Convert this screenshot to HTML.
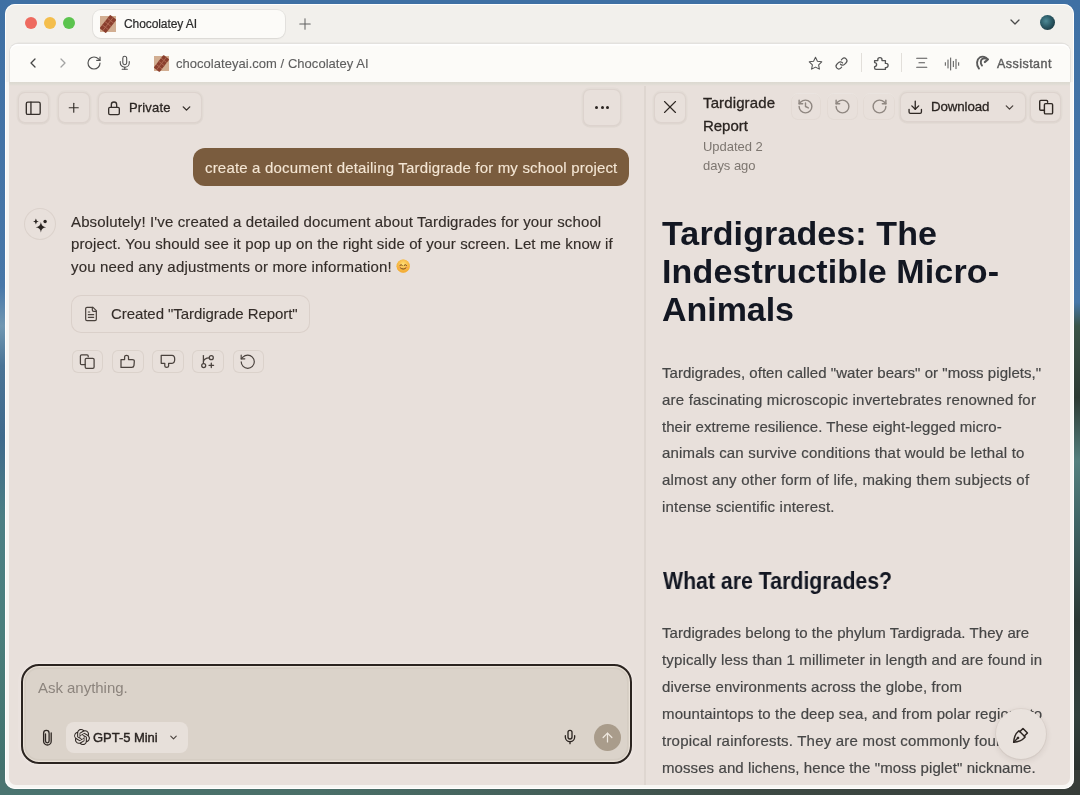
<!DOCTYPE html>
<html><head><meta charset="utf-8">
<style>
*{box-sizing:border-box;margin:0;padding:0}
html,body{width:1080px;height:795px;overflow:hidden}
body{position:relative;font-family:"Liberation Sans",sans-serif;
 background:#3f70a4;}
.abs{position:absolute}
.t{position:absolute;white-space:nowrap;line-height:1;will-change:transform}
svg{position:absolute;overflow:visible}
</style></head>
<body>
<div class="abs" style="left:1050px;top:0px;width:30px;height:795px;background:linear-gradient(180deg,#3f70a4 0%,#4677a9 38%,#3a5548 41%,#2c3a33 50%,#54807e 58%,#3e6464 66%,#2a3834 78%,#30403c 90%,#262a28 100%)"></div>
<div class="abs" style="left:0px;top:0px;width:30px;height:795px;background:linear-gradient(180deg,#3f70a4 0%,#4777a8 36%,#7097b2 41%,#4a7496 46%,#3f6a8c 55%,#4b7f84 65%,#4a7f7c 80%,#3f6f6a 100%)"></div>
<div class="abs" style="left:0px;top:770px;width:1080px;height:25px;background:linear-gradient(90deg,#4a7470 0%,#4a6f68 30%,#44605a 50%,#3d4a44 70%,#363c38 100%)"></div>
<div class="abs" style="left:5px;top:4px;width:1069px;height:785px;border-radius:10px;background:linear-gradient(180deg,#F2F0EC 0,#F2F0EC 78px,#F7F6F3 78px);box-shadow:inset 0 0 0 1px rgba(255,255,255,.9)"></div>
<div class="abs" style="left:24.5px;top:17.3px;width:12px;height:12px;border-radius:50%;background:#EE6A5F"></div>
<div class="abs" style="left:43.8px;top:17.3px;width:12px;height:12px;border-radius:50%;background:#F4BE4C"></div>
<div class="abs" style="left:62.900000000000006px;top:17.3px;width:12px;height:12px;border-radius:50%;background:#5CC44E"></div>
<div class="abs" style="left:93px;top:9.5px;width:192px;height:28.5px;border-radius:8px;background:#FCFBF8;box-shadow:0 0 0 1px rgba(0,0,0,.05),0 1px 2px rgba(0,0,0,.05)"></div>
<svg style="left:100px;top:16px" width="16" height="16" viewBox="0 0 16 16"><rect x="0" y="0" width="16" height="16" fill="#D2AE92"/><g transform="rotate(38 8 8)"><rect x="4" y="-0.5" width="8" height="17" rx="0.8" fill="#8A3F2E"/><path d="M4 3.8h8M4 8h8M4 12.2h8M8 -0.5v17" stroke="#B06A55" stroke-width="0.9"/></g></svg>
<div class="t" style="left:124.00px;top:17.64px;font-size:12px;color:#2b2b2b;letter-spacing:-0.087px;-webkit-text-stroke:0.2px #2b2b2b;">Chocolatey AI</div>
<svg style="left:296.00px;top:14.80px;" width="18" height="18" viewBox="0 0 24 24" fill="none" stroke="#606060" stroke-width="1.35" stroke-linecap="round" stroke-linejoin="round"><path d="M5 12h14"/><path d="M12 5v14"/></svg>
<svg style="left:1006.70px;top:14.20px;" width="16" height="16" viewBox="0 0 24 24" fill="none" stroke="#4a4a4a" stroke-width="1.9" stroke-linecap="round" stroke-linejoin="round"><path d="m6 9 6 6 6-6"/></svg>
<div class="abs" style="left:1039.9px;top:15.1px;width:15px;height:15px;border-radius:50%;background:radial-gradient(circle at 40% 40%,#4d8a96 0%,#2b5a66 45%,#12262c 100%)"></div>
<div class="abs" style="left:10px;top:43.6px;width:1059.5px;height:38.4px;border-radius:8px 8px 0 0;background:#FCFBF8;box-shadow:0 -0.5px 0 1px rgba(0,0,0,.06),inset 0 1.5px 0 #fff"></div>
<svg style="left:25.20px;top:55.30px;" width="16" height="16" viewBox="0 0 24 24" fill="none" stroke="#454545" stroke-width="1.95" stroke-linecap="round" stroke-linejoin="round"><path d="m15 18-6-6 6-6"/></svg>
<svg style="left:54.90px;top:55.30px;" width="16" height="16" viewBox="0 0 24 24" fill="none" stroke="#a3a3a3" stroke-width="1.9" stroke-linecap="round" stroke-linejoin="round"><path d="m9 18 6-6-6-6"/></svg>
<svg style="left:85.90px;top:55.30px;" width="16" height="16" viewBox="0 0 24 24" fill="none" stroke="#505050" stroke-width="1.75" stroke-linecap="round" stroke-linejoin="round"><path d="M21 12a9 9 0 1 1-9-9c2.52 0 4.93 1 6.74 2.74L21 8"/><path d="M21 3v5h-5"/></svg>
<svg style="left:116.65px;top:55.45px;" width="15.5" height="15.5" viewBox="0 0 24 24" fill="none" stroke="#505050" stroke-width="1.7" stroke-linecap="round" stroke-linejoin="round"><path d="M12 2a3 3 0 0 0-3 3v7a3 3 0 0 0 6 0V5a3 3 0 0 0-3-3Z"/><path d="M19 10v2a7 7 0 0 1-14 0v-2"/><line x1="12" x2="12" y1="19" y2="22"/><line x1="8" x2="16" y1="22" y2="22"/></svg>
<svg style="left:154px;top:56px" width="15" height="15" viewBox="0 0 16 16"><rect x="0" y="0" width="16" height="16" fill="#D2AE92"/><g transform="rotate(38 8 8)"><rect x="4" y="-0.5" width="8" height="17" rx="0.8" fill="#8A3F2E"/><path d="M4 3.8h8M4 8h8M4 12.2h8M8 -0.5v17" stroke="#B06A55" stroke-width="0.9"/></g></svg>
<div class="t" style="left:176.00px;top:56.99px;font-size:13px;color:#5e5e5e;letter-spacing:0.033px;-webkit-text-stroke:0.12px #5e5e5e;">chocolateyai.com / Chocolatey AI</div>
<svg style="left:807.50px;top:55.80px;" width="15" height="15" viewBox="0 0 24 24" fill="none" stroke="#555" stroke-width="1.7" stroke-linecap="round" stroke-linejoin="round"><polygon points="12 2 15.09 8.26 22 9.27 17 14.14 18.18 21.02 12 17.77 5.82 21.02 7 14.14 2 9.27 8.91 8.26 12 2"/></svg>
<svg style="left:835.20px;top:56.80px;" width="13" height="13" viewBox="0 0 24 24" fill="none" stroke="#555" stroke-width="2.2" stroke-linecap="round" stroke-linejoin="round"><path d="M10 13a5 5 0 0 0 7.54.54l3-3a5 5 0 0 0-7.07-7.07l-1.72 1.71"/><path d="M14 11a5 5 0 0 0-7.54-.54l-3 3a5 5 0 0 0 7.07 7.07l1.71-1.71"/></svg>
<div class="abs" style="left:861.2px;top:52.6px;width:1.0px;height:19.4px;background:#E2DFDA"></div>
<svg style="left:0;top:0" width="1" height="1" viewBox="0 0 1 1"><g fill="none" stroke="#555" stroke-width="1.35" stroke-linecap="round" stroke-linejoin="round"><path d="M874.6 60.6 H877.8 V59.8 A2.1 2.1 0 0 1 882 59.8 V60.6 H885.4 V63.4 H886 A2.1 2.1 0 0 1 886 67.6 H885.4 V69.4 H876 Q874.6 69.4 874.6 68 V66.6 A2 2 0 0 0 874.6 62.6 Z"/></g></svg>
<div class="abs" style="left:900.5px;top:52.6px;width:1.0px;height:19.4px;background:#E2DFDA"></div>
<svg style="left:914.75px;top:56.45px;" width="13.5" height="13.5" viewBox="0 0 24 24" fill="none" stroke="#555" stroke-width="1.9" stroke-linecap="round" stroke-linejoin="round"><path d="M3 4h18"/><path d="M7 12h10"/><path d="M3 20h18"/></svg>
<svg style="left:943.70px;top:55.50px;" width="16" height="16" viewBox="0 0 24 24" fill="none" stroke="#555" stroke-width="1.5" stroke-linecap="round" stroke-linejoin="round"><path d="M2 10v4"/><path d="M6 6v12"/><path d="M10 3v18"/><path d="M14 8v8"/><path d="M18 5v14"/><path d="M22 10v4"/></svg>
<svg style="left:0;top:0" width="1" height="1" viewBox="0 0 1 1"><g fill="none" stroke="#5a5a5a" stroke-width="1.9" stroke-linecap="round"><path d="M979 68.6 C976 65 976.5 59.5 980 57.3 C982.5 55.8 986 56.8 987.6 59.3"/><path d="M982 65.6 C980.2 63.5 980.4 60.2 982.5 58.8 C983.6 58.2 984.6 58.2 985.4 58.6"/><path d="M984.9 62 L987.8 59.5" stroke-width="2.3"/></g></svg>
<div class="t" style="left:997.00px;top:58.32px;font-size:12.5px;color:#5c5c5c;letter-spacing:0.461px;-webkit-text-stroke:0.4px #5c5c5c;">Assistant</div>
<div class="abs" style="left:9px;top:82px;width:1061px;height:702.6px;background:#E8E0DB;border-radius:0 0 7px 7px"></div>
<div class="abs" style="left:9px;top:82px;width:1061px;height:4px;background:linear-gradient(180deg,#DCD9D0 0%,#DFDCD4 50%,#E8E0DB 100%)"></div>
<div class="abs" style="left:644px;top:86px;width:2px;height:698.6px;background:#DED6D0"></div>
<div class="abs" style="left:17.5px;top:92px;width:31.0px;height:31px;border-radius:7px;box-shadow:inset 0 0 0 1px rgba(110,85,65,.085),0 0 0 1.5px rgba(110,85,65,.03),0 1px 2px rgba(110,85,65,.05);background:#E8E0DB"></div>
<svg style="left:24.05px;top:98.55px;" width="18.5" height="18.5" viewBox="0 0 24 24" fill="none" stroke="#352f2b" stroke-width="1.75" stroke-linecap="round" stroke-linejoin="round"><rect width="18" height="16" x="3" y="4" rx="2"/><path d="M9 4v16"/></svg>
<div class="abs" style="left:58px;top:92px;width:31.5px;height:31px;border-radius:7px;box-shadow:inset 0 0 0 1px rgba(110,85,65,.085),0 0 0 1.5px rgba(110,85,65,.03),0 1px 2px rgba(110,85,65,.05);background:#E8E0DB"></div>
<svg style="left:65.65px;top:100.45px;" width="15.5" height="15.5" viewBox="0 0 24 24" fill="none" stroke="#352f2b" stroke-width="1.8" stroke-linecap="round" stroke-linejoin="round"><path d="M5 12h14"/><path d="M12 5v14"/></svg>
<div class="abs" style="left:98px;top:92px;width:103.5px;height:31px;border-radius:7px;box-shadow:inset 0 0 0 1px rgba(110,85,65,.085),0 0 0 1.5px rgba(110,85,65,.03),0 1px 2px rgba(110,85,65,.05);background:#E8E0DB"></div>
<svg style="left:105.80px;top:100.00px;" width="16" height="16" viewBox="0 0 24 24" fill="none" stroke="#352f2b" stroke-width="2.0" stroke-linecap="round" stroke-linejoin="round"><rect width="16" height="11" x="4" y="11" rx="2" ry="2"/><path d="M8 11V7a4 4 0 0 1 8 0v4"/></svg>
<div class="t" style="left:129.30px;top:100.99px;font-size:13px;color:#2a2421;letter-spacing:0.157px;-webkit-text-stroke:0.28px #2a2421;">Private</div>
<svg style="left:180.10px;top:101.70px;" width="13" height="13" viewBox="0 0 24 24" fill="none" stroke="#352f2b" stroke-width="2.6" stroke-linecap="round" stroke-linejoin="round"><path d="m6 9 6 6 6-6"/></svg>
<div class="abs" style="left:583.3px;top:89px;width:37.700000000000045px;height:37px;border-radius:7px;box-shadow:inset 0 0 0 1px rgba(110,85,65,.085),0 0 0 1.5px rgba(110,85,65,.03),0 1px 2px rgba(110,85,65,.05);background:#E8E0DB"></div>
<div class="abs" style="left:595.40px;top:106.30px;width:3px;height:3px;border-radius:50%;background:#2a2421"></div>
<div class="abs" style="left:600.80px;top:106.30px;width:3px;height:3px;border-radius:50%;background:#2a2421"></div>
<div class="abs" style="left:606.20px;top:106.30px;width:3px;height:3px;border-radius:50%;background:#2a2421"></div>
<div class="abs" style="left:193px;top:148.4px;width:436.29999999999995px;height:37.599999999999994px;border-radius:12px;background:#7A5C3E"></div>
<div class="t" style="left:205.00px;top:159.80px;font-size:15px;color:#F4E6D4;letter-spacing:0.181px;-webkit-text-stroke:0.12px #F4E6D4;">create a document detailing Tardigrade for my school project</div>
<div class="abs" style="left:24px;top:208.3px;width:32px;height:32px;border-radius:50%;box-shadow:inset 0 0 0 1px rgba(110,85,65,.10)"></div>
<svg style="left:24px;top:208px" width="32" height="32" viewBox="24 208 32 32"><path d="M40.9 222.10000000000002 Q41.4096 226.7904 46.1 227.3 Q41.4096 227.80960000000002 40.9 232.5 Q40.3904 227.80960000000002 35.699999999999996 227.3 Q40.3904 226.7904 40.9 222.10000000000002Z" fill="#2a2421"/><path d="M35.9 218.6 Q36.1842 221.2158 38.8 221.5 Q36.1842 221.7842 35.9 224.4 Q35.6158 221.7842 33.0 221.5 Q35.6158 221.2158 35.9 218.6Z" fill="#2a2421"/><circle cx="45.1" cy="221.5" r="1.7" fill="#2a2421"/></svg>
<div class="t" style="left:71.30px;top:213.60px;font-size:15px;color:#342d29;letter-spacing:0.127px;-webkit-text-stroke:0.15px #342d29;">Absolutely! I've created a detailed document about Tardigrades for your school</div>
<div class="t" style="left:71.30px;top:236.30px;font-size:15px;color:#342d29;letter-spacing:0.120px;-webkit-text-stroke:0.15px #342d29;">project. You should see it pop up on the right side of your screen. Let me know if</div>
<div class="t" style="left:71.30px;top:258.90px;font-size:15px;color:#342d29;letter-spacing:0.164px;-webkit-text-stroke:0.15px #342d29;">you need any adjustments or more information!</div>
<svg style="left:396.4px;top:259.2px" width="14.4" height="14.4" viewBox="0 0 24 24"><circle cx="12" cy="12" r="11" fill="#F6B83C"/><circle cx="12" cy="12" r="11" fill="url(#eg)"/><defs><radialGradient id="eg" cx="50%" cy="35%" r="60%"><stop offset="0" stop-color="#FFE27A"/><stop offset="1" stop-color="#F2A531" stop-opacity="0.6"/></radialGradient></defs><path d="M6.5 10.5q2-2.2 4 0M13.5 10.5q2-2.2 4 0" stroke="#6b3d12" stroke-width="1.6" fill="none" stroke-linecap="round"/><path d="M7 14.5q5 5 10 0" stroke="#6b3d12" stroke-width="1.6" fill="none" stroke-linecap="round"/><ellipse cx="6" cy="14" rx="2" ry="1.2" fill="#F58A6A" opacity=".6"/><ellipse cx="18" cy="14" rx="2" ry="1.2" fill="#F58A6A" opacity=".6"/></svg>
<div class="abs" style="left:70.8px;top:294.6px;width:239.59999999999997px;height:38.89999999999998px;border-radius:10px;box-shadow:inset 0 0 0 1px rgba(110,85,65,.11)"></div>
<svg style="left:82.80px;top:305.50px;" width="16" height="16" viewBox="0 0 24 24" fill="none" stroke="#4a423d" stroke-width="1.8" stroke-linecap="round" stroke-linejoin="round"><path d="M15 2H6a2 2 0 0 0-2 2v16a2 2 0 0 0 2 2h12a2 2 0 0 0 2-2V7Z"/><path d="M14 2v4a2 2 0 0 0 2 2h4"/><path d="M10 9H8"/><path d="M16 13H8"/><path d="M16 17H8"/></svg>
<div class="t" style="left:111.00px;top:305.90px;font-size:15px;color:#342d29;letter-spacing:-0.063px;-webkit-text-stroke:0.12px #342d29;">Created "Tardigrade Report"</div>
<div class="abs" style="left:71.8px;top:349.8px;width:31.5px;height:23.19999999999999px;border-radius:6px;box-shadow:inset 0 0 0 1px rgba(110,85,65,.10)"></div>
<div class="abs" style="left:112.0px;top:349.8px;width:31.5px;height:23.19999999999999px;border-radius:6px;box-shadow:inset 0 0 0 1px rgba(110,85,65,.10)"></div>
<div class="abs" style="left:152.2px;top:349.8px;width:31.5px;height:23.19999999999999px;border-radius:6px;box-shadow:inset 0 0 0 1px rgba(110,85,65,.10)"></div>
<div class="abs" style="left:192.4px;top:349.8px;width:31.5px;height:23.19999999999999px;border-radius:6px;box-shadow:inset 0 0 0 1px rgba(110,85,65,.10)"></div>
<div class="abs" style="left:232.6px;top:349.8px;width:31.50000000000003px;height:23.19999999999999px;border-radius:6px;box-shadow:inset 0 0 0 1px rgba(110,85,65,.10)"></div>
<svg style="left:0;top:0" width="1" height="1" viewBox="0 0 1 1"><g fill="none" stroke="#4a423d" stroke-width="1.25" stroke-linecap="round" stroke-linejoin="round"><path d="M88.2 356.8 V356 Q88.2 354.8 87 354.8 H81.6 Q80.4 354.8 80.4 356 V363.4 Q80.4 364.6 81.6 364.6 H85.2"/><rect x="85.2" y="358.3" width="8.9" height="10" rx="1.3"/></g></svg>
<svg style="left:0;top:0" width="1" height="1" viewBox="0 0 1 1"><g fill="none" stroke="#4a423d" stroke-width="1.25" stroke-linecap="round" stroke-linejoin="round"><path d="M121 359.6 H124.6 V356.8 Q124.6 355.3 126.55 355.3 Q128.5 355.3 128.5 356.8 V359.6 H132.3 Q134.4 359.6 134.3 361.5 L134 365.4 Q133.8 367.4 131.8 367.4 H121 Z"/></g></svg>
<svg style="left:0;top:0" width="1" height="1" viewBox="0 0 1 1"><g fill="none" stroke="#4a423d" stroke-width="1.25" stroke-linecap="round" stroke-linejoin="round"><path d="M161.2 355.4 H172 Q174.7 355.4 174.7 359.3 Q174.7 363.3 172 363.3 H168.6 V366 Q168.6 367.4 166.7 367.4 Q164.8 367.4 164.8 366 V363.3 H161.2 Z"/></g></svg>
<svg style="left:0;top:0" width="1" height="1" viewBox="0 0 1 1"><g fill="none" stroke="#4a423d" stroke-width="1.25" stroke-linecap="round" stroke-linejoin="round"><path d="M203.4 355.6 V363.3"/><path d="M203.5 361.3 Q204.2 358.1 209.2 357.8"/><circle cx="211.3" cy="357.7" r="2"/><circle cx="203.7" cy="365.5" r="2"/><path d="M211.3 363 V367.6 M209 365.3 H213.6"/></g></svg>
<svg style="left:238.95px;top:352.65px;" width="17.5" height="17.5" viewBox="0 0 24 24" fill="none" stroke="#4a423d" stroke-width="1.6" stroke-linecap="round" stroke-linejoin="round"><path d="M3 12a9 9 0 1 0 9-9 9.75 9.75 0 0 0-6.74 2.74L3 8"/><path d="M3 3v5h5"/></svg>
<div class="abs" style="left:21.2px;top:663.8px;width:611.3px;height:100.6px;border-radius:18px;border:2px solid #2B2420;background:#DBD3CA;box-shadow:inset 0 0 0 1.2px rgba(255,248,238,.5),inset 0 0 0 3px rgba(190,178,168,.18),0 0 0 1px rgba(255,250,245,.25),0 0 0 3px rgba(255,250,245,.12)"></div>
<div class="t" style="left:37.90px;top:680.10px;font-size:15px;color:#8C847D;letter-spacing:-0.029px;">Ask anything.</div>
<svg style="left:0;top:0" width="1" height="1" viewBox="0 0 1 1"><path d="M51.2 733 V741.2 A3.8 3.8 0 0 1 43.6 741.2 V733.2 A2.75 2.75 0 0 1 49.1 733.2 V741 A1.8 1.8 0 0 1 45.5 741 V734" fill="none" stroke="#2e2723" stroke-width="1.3" stroke-linecap="round"/></svg>
<div class="abs" style="left:66px;top:721.9px;width:122.30000000000001px;height:30.700000000000045px;border-radius:8px;background:#E7E0DA"></div>
<svg style="left:73.6px;top:729.2px" width="16" height="16" viewBox="0 0 24 24"><path fill="#2e2723" d="M22.2819 9.8211a5.9847 5.9847 0 0 0-.5157-4.9108 6.0462 6.0462 0 0 0-6.5098-2.9A6.0651 6.0651 0 0 0 4.9807 4.1818a5.9847 5.9847 0 0 0-3.9977 2.9 6.0462 6.0462 0 0 0 .7427 7.0966 5.98 5.98 0 0 0 .511 4.9107 6.051 6.051 0 0 0 6.5146 2.9001A5.9847 5.9847 0 0 0 13.2599 24a6.0557 6.0557 0 0 0 5.7718-4.2058 5.9894 5.9894 0 0 0 3.9977-2.9001 6.0557 6.0557 0 0 0-.7475-7.0729zm-9.022 12.6081a4.4755 4.4755 0 0 1-2.8764-1.0408l.1419-.0804 4.7783-2.7582a.7948.7948 0 0 0 .3927-.6813v-6.7369l2.02 1.1686a.071.071 0 0 1 .038.052v5.5826a4.504 4.504 0 0 1-4.4945 4.4944zm-9.6607-4.1254a4.4708 4.4708 0 0 1-.5346-3.0137l.142.0852 4.783 2.7582a.7712.7712 0 0 0 .7806 0l5.8428-3.3685v2.3324a.0804.0804 0 0 1-.0332.0615L9.74 19.9502a4.4992 4.4992 0 0 1-6.1408-1.6464zM2.3408 7.8956a4.485 4.485 0 0 1 2.3655-1.9728V11.6a.7664.7664 0 0 0 .3879.6765l5.8144 3.3543-2.0201 1.1685a.0757.0757 0 0 1-.071 0l-4.8303-2.7865A4.504 4.504 0 0 1 2.3408 7.872zm16.5963 3.8558L13.1038 8.364 15.1192 7.2a.0757.0757 0 0 1 .071 0l4.8303 2.7913a4.4944 4.4944 0 0 1-.6765 8.1042v-5.6772a.79.79 0 0 0-.407-.667zm2.0107-3.0231l-.142-.0852-4.7735-2.7818a.7759.7759 0 0 0-.7854 0L9.409 9.2297V6.8974a.0662.0662 0 0 1 .0284-.0615l4.8303-2.7866a4.4992 4.4992 0 0 1 6.6802 4.66zM8.3065 12.863l-2.02-1.1638a.0804.0804 0 0 1-.038-.0567V6.0742a4.4992 4.4992 0 0 1 7.3757-3.4537l-.142.0805L8.704 5.459a.7948.7948 0 0 0-.3927.6813zm1.0976-2.3654l2.602-1.4998 2.6069 1.4998v2.9994l-2.5974 1.4997-2.6067-1.4997Z"/></svg>
<div class="t" style="left:93.30px;top:730.99px;font-size:13px;color:#2a2421;letter-spacing:-0.035px;-webkit-text-stroke:0.4px #2a2421;">GPT-5 Mini</div>
<svg style="left:168.00px;top:731.50px;" width="11" height="11" viewBox="0 0 24 24" fill="none" stroke="#4a423d" stroke-width="2.4" stroke-linecap="round" stroke-linejoin="round"><path d="m6 9 6 6 6-6"/></svg>
<svg style="left:561.60px;top:729.40px;" width="16" height="16" viewBox="0 0 24 24" fill="none" stroke="#2e2723" stroke-width="2" stroke-linecap="round" stroke-linejoin="round"><path d="M12 2a3 3 0 0 0-3 3v7a3 3 0 0 0 6 0V5a3 3 0 0 0-3-3Z"/><path d="M19 10v2a7 7 0 0 1-14 0v-2"/><line x1="12" x2="12" y1="19" y2="22"/></svg>
<div class="abs" style="left:593.5px;top:723.8px;width:27px;height:27px;border-radius:50%;background:#A99C8B"></div>
<svg style="left:599.50px;top:729.80px;" width="15" height="15" viewBox="0 0 24 24" fill="none" stroke="#EFE8DF" stroke-width="2" stroke-linecap="round" stroke-linejoin="round"><path d="m5 12 7-7 7 7"/><path d="M12 19V5"/></svg>
<div class="abs" style="left:654px;top:92px;width:32.39999999999998px;height:30.799999999999997px;border-radius:7px;box-shadow:inset 0 0 0 1px rgba(110,85,65,.085),0 0 0 1.5px rgba(110,85,65,.03),0 1px 2px rgba(110,85,65,.05);background:#E8E0DB"></div>
<svg style="left:659.10px;top:96.30px;" width="22" height="22" viewBox="0 0 24 24" fill="none" stroke="#2e2723" stroke-width="1.25" stroke-linecap="round" stroke-linejoin="round"><path d="M18 6 6 18"/><path d="m6 6 12 12"/></svg>
<div class="t" style="left:702.60px;top:94.70px;font-size:15px;color:#2a2421;letter-spacing:0.125px;-webkit-text-stroke:0.3px #2a2421;">Tardigrade</div>
<div class="t" style="left:702.60px;top:117.70px;font-size:15px;color:#2a2421;letter-spacing:-0.044px;-webkit-text-stroke:0.3px #2a2421;">Report</div>
<div class="t" style="left:702.60px;top:139.99px;font-size:13px;color:#7D7670;letter-spacing:-0.036px;">Updated 2</div>
<div class="t" style="left:702.60px;top:158.79px;font-size:13px;color:#7D7670;letter-spacing:-0.037px;">days ago</div>
<div class="abs" style="left:791px;top:92.6px;width:29.600000000000023px;height:27.200000000000003px;border-radius:7px;box-shadow:inset 0 0 0 1px rgba(110,85,65,.045),inset 0 1px 0 rgba(255,255,255,.35)"></div>
<svg style="left:797.40px;top:98.10px;" width="17" height="17" viewBox="0 0 24 24" fill="none" stroke="#8f8781" stroke-width="2" stroke-linecap="round" stroke-linejoin="round"><path d="M3 12a9 9 0 1 0 9-9 9.75 9.75 0 0 0-6.74 2.74L3 8"/><path d="M3 3v5h5"/><path d="M12 7v5l4 2"/></svg>
<div class="abs" style="left:826.7px;top:92.6px;width:31.59999999999991px;height:27.200000000000003px;border-radius:7px;box-shadow:inset 0 0 0 1px rgba(110,85,65,.045),inset 0 1px 0 rgba(255,255,255,.35)"></div>
<svg style="left:833.70px;top:98.10px;" width="17" height="17" viewBox="0 0 24 24" fill="none" stroke="#8f8781" stroke-width="2" stroke-linecap="round" stroke-linejoin="round"><path d="M3 12a9 9 0 1 0 9-9 9.75 9.75 0 0 0-6.74 2.74L3 8"/><path d="M3 3v5h5"/></svg>
<div class="abs" style="left:863.4px;top:92.6px;width:31.600000000000023px;height:27.200000000000003px;border-radius:7px;box-shadow:inset 0 0 0 1px rgba(110,85,65,.045),inset 0 1px 0 rgba(255,255,255,.35)"></div>
<svg style="left:870.90px;top:98.10px;" width="17" height="17" viewBox="0 0 24 24" fill="none" stroke="#8f8781" stroke-width="2" stroke-linecap="round" stroke-linejoin="round"><path d="M21 12a9 9 0 1 1-9-9c2.52 0 4.93 1 6.74 2.74L21 8"/><path d="M21 3v5h-5"/></svg>
<div class="abs" style="left:900px;top:92px;width:125.5px;height:30.299999999999997px;border-radius:7px;box-shadow:inset 0 0 0 1px rgba(110,85,65,.085),0 0 0 1.5px rgba(110,85,65,.03),0 1px 2px rgba(110,85,65,.05);background:#E8E0DB"></div>
<svg style="left:907.25px;top:98.75px;" width="16.5" height="16.5" viewBox="0 0 24 24" fill="none" stroke="#2e2723" stroke-width="1.9" stroke-linecap="round" stroke-linejoin="round"><path d="M21 15v4a2 2 0 0 1-2 2H5a2 2 0 0 1-2-2v-4"/><polyline points="7 10 12 15 17 10"/><line x1="12" x2="12" y1="15" y2="3"/></svg>
<div class="t" style="left:931.00px;top:100.14px;font-size:13.3px;color:#2a2421;letter-spacing:-0.093px;-webkit-text-stroke:0.3px #2a2421;">Download</div>
<svg style="left:1003.10px;top:100.50px;" width="13" height="13" viewBox="0 0 24 24" fill="none" stroke="#4a423d" stroke-width="2.4" stroke-linecap="round" stroke-linejoin="round"><path d="m6 9 6 6 6-6"/></svg>
<div class="abs" style="left:1030px;top:92px;width:30.700000000000045px;height:30.299999999999997px;border-radius:7px;box-shadow:inset 0 0 0 1px rgba(110,85,65,.085),0 0 0 1.5px rgba(110,85,65,.03),0 1px 2px rgba(110,85,65,.05);background:#E8E0DB"></div>
<svg style="left:0;top:0" width="1" height="1" viewBox="0 0 1 1"><g fill="none" stroke="#2e2723" stroke-width="1.4" stroke-linecap="round" stroke-linejoin="round"><path d="M1047.6 102.2 V101.4 Q1047.6 100.4 1046.6 100.4 H1040.7 Q1039.7 100.4 1039.7 101.4 V109.2 Q1039.7 110.2 1040.7 110.2 H1044.4"/><rect x="1044.4" y="103.6" width="8.2" height="10.3" rx="1.2"/></g></svg>
<div class="t" style="left:662.40px;top:215.51px;font-size:34px;color:#131722;font-weight:700;letter-spacing:0.112px;">Tardigrades: The</div>
<div class="t" style="left:662.40px;top:253.91px;font-size:34px;color:#131722;font-weight:700;letter-spacing:0.131px;">Indestructible Micro-</div>
<div class="t" style="left:662.40px;top:292.21px;font-size:34px;color:#131722;font-weight:700;letter-spacing:-0.044px;">Animals</div>
<div class="t" style="left:662.30px;top:365.10px;font-size:15px;color:#464646;letter-spacing:0.046px;-webkit-text-stroke:0.2px #464646;">Tardigrades, often called "water bears" or "moss piglets,"</div>
<div class="t" style="left:662.30px;top:391.85px;font-size:15px;color:#464646;letter-spacing:0.196px;-webkit-text-stroke:0.2px #464646;">are fascinating microscopic invertebrates renowned for</div>
<div class="t" style="left:662.30px;top:418.60px;font-size:15px;color:#464646;letter-spacing:0.046px;-webkit-text-stroke:0.2px #464646;">their extreme resilience. These eight-legged micro-</div>
<div class="t" style="left:662.30px;top:445.35px;font-size:15px;color:#464646;letter-spacing:0.167px;-webkit-text-stroke:0.2px #464646;">animals can survive conditions that would be lethal to</div>
<div class="t" style="left:662.30px;top:472.10px;font-size:15px;color:#464646;letter-spacing:0.225px;-webkit-text-stroke:0.2px #464646;">almost any other form of life, making them subjects of</div>
<div class="t" style="left:662.30px;top:498.85px;font-size:15px;color:#464646;letter-spacing:0.179px;-webkit-text-stroke:0.2px #464646;">intense scientific interest.</div>
<div class="t" style="left:662.60px;top:569.76px;font-size:23.2px;color:#131722;font-weight:700;transform:scaleX(0.918);transform-origin:0 0">What are Tardigrades?</div>
<div class="t" style="left:662.30px;top:625.40px;font-size:15px;color:#464646;letter-spacing:0.065px;-webkit-text-stroke:0.2px #464646;">Tardigrades belong to the phylum Tardigrada. They are</div>
<div class="t" style="left:662.30px;top:652.22px;font-size:15px;color:#464646;letter-spacing:0.142px;-webkit-text-stroke:0.2px #464646;">typically less than 1 millimeter in length and are found in</div>
<div class="t" style="left:662.30px;top:679.04px;font-size:15px;color:#464646;letter-spacing:0.113px;-webkit-text-stroke:0.2px #464646;">diverse environments across the globe, from</div>
<div class="t" style="left:662.30px;top:705.86px;font-size:15px;color:#464646;letter-spacing:0.136px;-webkit-text-stroke:0.2px #464646;">mountaintops to the deep sea, and from polar regions to</div>
<div class="t" style="left:662.30px;top:732.68px;font-size:15px;color:#464646;letter-spacing:0.209px;-webkit-text-stroke:0.2px #464646;">tropical rainforests. They are most commonly found in</div>
<div class="t" style="left:662.30px;top:759.50px;font-size:15px;color:#464646;letter-spacing:0.087px;-webkit-text-stroke:0.2px #464646;">mosses and lichens, hence the "moss piglet" nickname.</div>
<div class="abs" style="left:996px;top:708.8px;width:49.8px;height:49.8px;border-radius:50%;background:#E9E2DD;box-shadow:0 2px 6px rgba(60,40,30,.12),0 0 0 1px rgba(110,85,65,.06)"></div>
<svg style="left:0;top:0" width="1" height="1" viewBox="0 0 1 1"><g fill="none" stroke="#2e2723" stroke-width="1.45" stroke-linecap="round" stroke-linejoin="round"><g transform="translate(1020.9 735.0) rotate(45) scale(1.02)"><path d="M0 10 Q-4.6 4.5 -4.3 0.2 V-1.6 H4.3 V0.2 Q4.6 4.5 0 10 Z"/><path d="M-3.1 -1.6 V-6 H3.1 V-1.6"/><path d="M0 10 V5.2"/><circle cx="0" cy="4" r="0.6" fill="#2e2723"/></g></g></svg>
</body></html>
